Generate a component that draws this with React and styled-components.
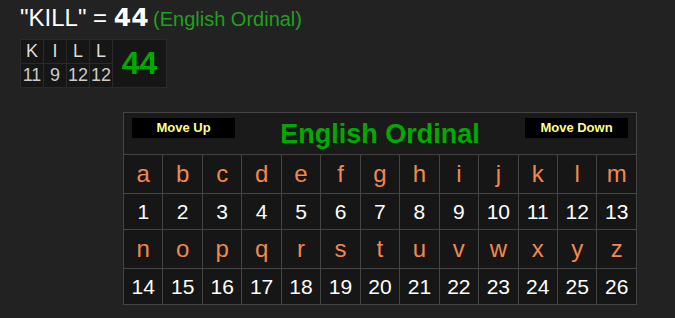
import styled, { createGlobalStyle } from "styled-components";

const GlobalStyle = createGlobalStyle`
  html, body {
    margin: 0;
    padding: 0;
    background-color: #222222;
    font-family: "Liberation Sans", Arial, sans-serif;
  }
`;

const word = "KILL";
const alphabet = "abcdefghijklmnopqrstuvwxyz".split("");
const letterValue = (ch) => ch.toLowerCase().charCodeAt(0) - 96;
const total = word.split("").reduce((sum, ch) => sum + letterValue(ch), 0);
const halves = [alphabet.slice(0, 13), alphabet.slice(13)];

const App = () => {
  return (
    <>
      <GlobalStyle />
      <Page>
        <Heading>
          <Phrase>"{word}" = </Phrase>
          <Total>{total}</Total> <Cipher>(English Ordinal)</Cipher>
        </Heading>

        <Breakdown>
          <tbody>
            <tr>
              {word.split("").map((ch, i) => (
                <BreakLetter key={i}>{ch}</BreakLetter>
              ))}
              <BreakTotal rowSpan={2}>{total}</BreakTotal>
            </tr>
            <tr>
              {word.split("").map((ch, i) => (
                <BreakNumber key={i}>{letterValue(ch)}</BreakNumber>
              ))}
            </tr>
          </tbody>
        </Breakdown>

        <CipherTable>
          <tbody>
            <tr>
              <HeaderCell colSpan={13}>
                <HeaderBar>
                  <MoveButton>Move Up</MoveButton>
                  <Title>English Ordinal</Title>
                  <MoveButton>Move Down</MoveButton>
                </HeaderBar>
              </HeaderCell>
            </tr>
            {halves.map((letters, row) => [
              <tr key={`l${row}`}>
                {letters.map((ch) => (
                  <LetterCell key={ch}>{ch}</LetterCell>
                ))}
              </tr>,
              <tr key={`n${row}`}>
                {letters.map((ch) => (
                  <NumberCell key={ch}>{letterValue(ch)}</NumberCell>
                ))}
              </tr>,
            ])}
          </tbody>
        </CipherTable>
      </Page>
    </>
  );
};

export default App;

const Page = styled.div`
  width: 675px;
  height: 318px;
  overflow: hidden;
  padding: 4px 0 0 20px;
  box-sizing: border-box;
`;

const Heading = styled.div`
  line-height: 28px;
  white-space: nowrap;
`;

const Phrase = styled.span`
  font-size: 24px;
  color: #ffffff;
`;

const Total = styled.span`
  font-family: "DejaVu Sans", Verdana, sans-serif;
  font-weight: bold;
  font-size: 25px;
  color: #ffffff;
`;

const Cipher = styled.span`
  font-size: 20px;
  color: #1fa01f;
`;

const Breakdown = styled.table`
  margin-top: 4px;
  border-collapse: collapse;
  background-color: #161616;
`;

const BreakLetter = styled.td`
  width: 22px;
  height: 23px;
  padding: 0;
  border: 1px solid #2a2a2a;
  text-align: center;
  font-size: 18px;
  color: #dddddd;
`;

const BreakNumber = styled(BreakLetter)`
  color: #cccccc;
`;

const BreakTotal = styled.td`
  width: 53px;
  padding: 0;
  border: 1px solid #2a2a2a;
  text-align: center;
  font-size: 32px;
  font-weight: bold;
  color: #00aa00;
`;

const CipherTable = styled.table`
  margin: 24px 0 0 103px;
  width: 514px;
  table-layout: fixed;
  border-collapse: collapse;
  background-color: #161616;
`;

const HeaderCell = styled.td`
  height: 41px;
  padding: 0;
  border: 1px solid #444444;
  background-color: #1a1a1a;
  vertical-align: top;
`;

const HeaderBar = styled.div`
  height: 41px;
  display: flex;
  justify-content: space-between;
  align-items: flex-start;
  padding: 5px 8px 0 8px;
  box-sizing: border-box;
`;

const MoveButton = styled.div`
  width: 103px;
  height: 20px;
  line-height: 20px;
  background-color: #000003;
  color: #ffff88;
  font-size: 13px;
  font-weight: bold;
  text-align: center;
`;

const Title = styled.div`
  align-self: center;
  margin-top: -4px;
  font-size: 27px;
  font-weight: bold;
  color: #00aa00;
`;

const LetterCell = styled.td`
  height: 38px;
  padding: 0;
  border: 1px solid #444444;
  text-align: center;
  vertical-align: middle;
  font-size: 24px;
  color: #f0884f;
`;

const NumberCell = styled(LetterCell)`
  height: 35px;
  font-size: 21px;
  color: #ffffff;
`;
